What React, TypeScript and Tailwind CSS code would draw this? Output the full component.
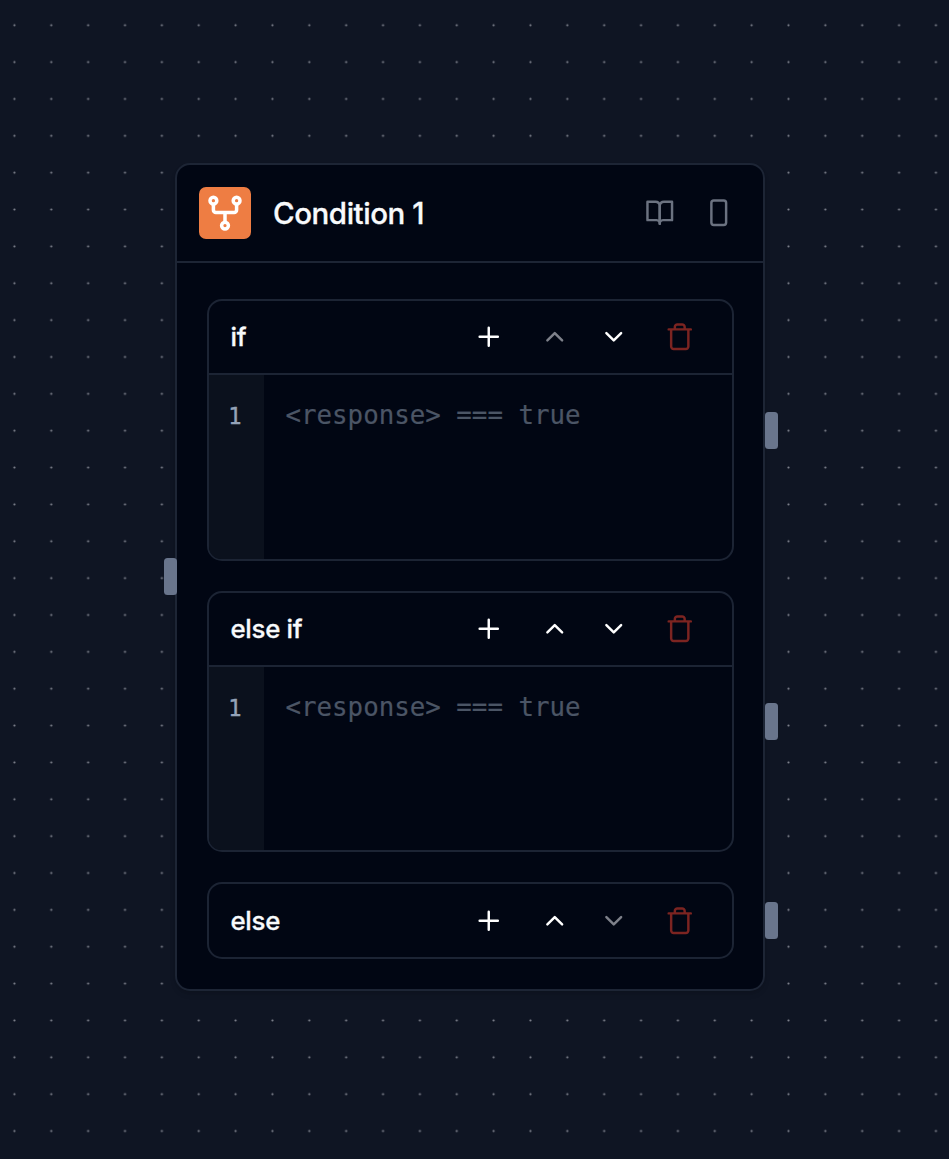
import React from "react";

const iconProps = {
  viewBox: "0 0 24 24",
  fill: "none",
  stroke: "currentColor",
  strokeWidth: 2,
  strokeLinecap: "round" as const,
  strokeLinejoin: "round" as const,
};

const BookOpen = () => (
  <svg {...iconProps} className="size-[29.5px]">
    <path d="M2 3h6.5a3.5 3.5 0 0 1 3.5 3v15a2.6 2.6 0 0 0-2.6-3H2z" />
    <path d="M22 3h-6.5a3.5 3.5 0 0 0-3.5 3v15a2.6 2.6 0 0 1 2.6-3H22z" />
  </svg>
);

const Panel = () => (
  <svg {...iconProps} className="size-[29.5px]">
    <rect x="6" y="2" width="12" height="20" rx="2" />
  </svg>
);

const Plus = () => (
  <svg {...iconProps} className="size-[29.5px]" strokeWidth={2}>
    <path d="M12 4.6v14.8M4.6 12h14.8" />
  </svg>
);

const Chevron = ({ up }: { up?: boolean }) => (
  <svg {...iconProps} className="size-[29.5px]">
    <path d={up ? "m18 15-6-6-6 6" : "m6 9 6 6 6-6"} />
  </svg>
);

const Trash = () => (
  <svg {...iconProps} className="size-[29.5px]">
    <path d="M3 6h18M19 6v14c0 1-1 2-2 2H7c-1 0-2-1-2-2V6M8 6V4c0-1 1-2 2-2h4c1 0 2 1 2 2v2" />
  </svg>
);

const Fork = () => (
  <svg viewBox="0 0 52 52" fill="none" stroke="white" strokeWidth="3.5" className="size-[52px]">
    <circle cx="14.4" cy="13.7" r="3.4" />
    <circle cx="37.6" cy="13.7" r="3.4" />
    <circle cx="26" cy="38.6" r="3.4" />
    <path d="M14.4 17v6a2.5 2.5 0 0 0 2.5 2.5h18.2a2.5 2.5 0 0 0 2.5-2.5v-6M26 25.5v10" />
  </svg>
);

function Handle({ className }: { className: string }) {
  return <span className={`absolute h-[37px] w-[13px] rounded-[3.5px] bg-[#69758c] ${className}`} />;
}

type BranchProps = { label: string; first?: boolean; last?: boolean; code?: string };

function Branch({ label, first, last, code }: BranchProps) {
  return (
    <section className="relative w-[527px] rounded-[15px] border-2 border-[#1c2434]">
      <header className={`flex items-center pl-[22px] pr-[36.7px] ${code ? "h-[72px]" : "h-[73px]"}`}>
        <h2 className="flex-1 pt-px text-[25.8px] font-medium tracking-[-0.3px] text-[#f8fafc] [-webkit-text-stroke:0.3px]">{label}</h2>
        <button className="mr-[36.7px] text-white"><Plus /></button>
        <button className={first ? "mr-[29.5px] text-[#7e818a]" : "mr-[29.5px] text-white"}><Chevron up /></button>
        <button className={last ? "mr-[36.7px] text-[#7e818a]" : "mr-[36.7px] text-white"}><Chevron /></button>
        <button className="text-[#7c2421]"><Trash /></button>
      </header>
      {code && (
        <div className="flex h-[185.5px] border-t-2 border-[#1c2434] font-['DejaVu_Sans_Mono',monospace]">
          <div className="w-[55px] rounded-bl-[12px] bg-[#0b111d] pr-[2px] pt-[25px] text-center text-[22.1px] leading-[32px] text-[#94a3b8] [-webkit-text-stroke:0.4px]">1</div>
          <div className="pl-[22px] pt-[24px] text-[25.8px] leading-[32px] text-[#4b5565] [-webkit-text-stroke:0.2px]">{code}</div>
        </div>
      )}
      <Handle className={code ? "-right-[46.5px] top-[110.7px]" : "-right-[46.5px] top-[18px]"} />
    </section>
  );
}

export default function App() {
  return (
    <main className="relative flex h-[1159px] w-[949px] items-start overflow-hidden bg-[#0f1523] pl-[175px] pt-[163px] font-['Inter',sans-serif]">
      <svg className="absolute inset-0 h-full w-full">
        <defs>
          <pattern id="dots" x="-4" y="6.8" width="36.86" height="36.86" patternUnits="userSpaceOnUse">
            <circle cx="18.43" cy="18.43" r="1.1" fill="#80838e" />
          </pattern>
        </defs>
        <rect width="100%" height="100%" fill="url(#dots)" />
      </svg>
      <article className="relative h-[828px] w-[590px] rounded-[15px] border-2 border-[#1d2535] bg-[#010613] shadow-md">
        <header className="flex h-[98px] items-center border-b-2 border-[#1d2535] pl-[22px] pr-[29.5px]">
          <span className="rounded-[7px] bg-[#ee7d43]"><Fork /></span>
          <h1 className="ml-[22px] flex-1 text-[29.5px] font-medium tracking-[-0.45px] text-[#f8fafc] [-webkit-text-stroke:0.3px]">Condition 1</h1>
          <div className="flex gap-[29.5px] text-[#6b7280]"><BookOpen /><Panel /></div>
        </header>
        <div className="flex flex-col gap-[30px] pl-[29.5px] pt-[36px]">
          <Branch label="if" first code="<response> === true" />
          <Branch label="else if" code="<response> === true" />
          <Branch label="else" last />
        </div>
        <Handle className="-left-[13px] top-[393px]" />
      </article>
    </main>
  );
}
